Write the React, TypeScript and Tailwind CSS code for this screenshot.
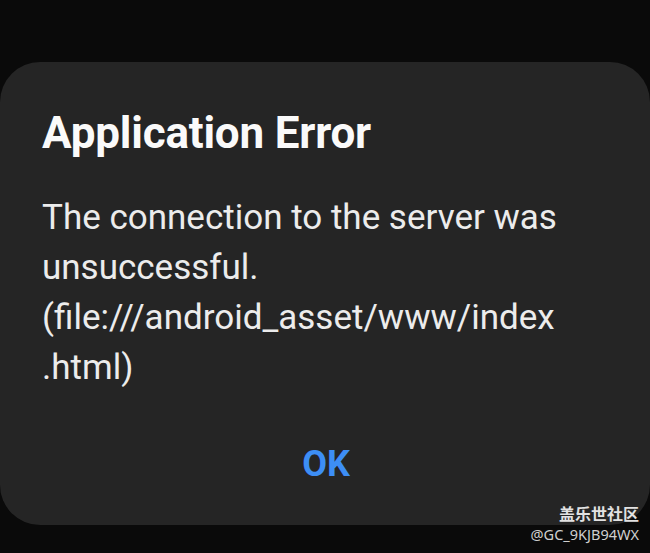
export default function App() {
  return (
    <div className="relative h-[553px] w-[650px] overflow-hidden bg-[#0a0a0a] pt-[62px] font-['Roboto','Liberation_Sans',sans-serif]">
      <div className="h-[463px] w-[650px] rounded-[40px] bg-[#252525] pl-[42px] pr-6 pt-[45px] pb-[35px]">
        <h1 className="text-[44px] font-bold leading-[52px] tracking-[-0.2px] text-[#fafafa]">Application Error</h1>
        <p className="mt-[34px] text-[35px] leading-[50px] text-[#ececec]">
          The connection to the server was
          <br />
          unsuccessful.
          <br />
          (file:///android_asset/www/index
          <br />
          .html)
        </p>
        <div className="mt-[46px] flex justify-center pr-[16px]">
          <button className="text-[36px] font-bold leading-[50px] text-[#3d8ef5]">OK</button>
        </div>
      </div>

      {/* watermark */}
      <div className="absolute right-[11px] bottom-[10px] flex flex-col items-end leading-none">
        <span className="font-['Noto_Sans_CJK_SC',sans-serif] text-[16px] font-bold leading-[20px] text-[#e2e2e2]">盖乐世社区</span>
        <span className="mt-[2px] font-['Noto_Sans','Liberation_Sans',sans-serif] text-[14.5px] leading-[18px] text-[#cfcfcf]">@GC_9KJB94WX</span>
      </div>
    </div>
  )
}
